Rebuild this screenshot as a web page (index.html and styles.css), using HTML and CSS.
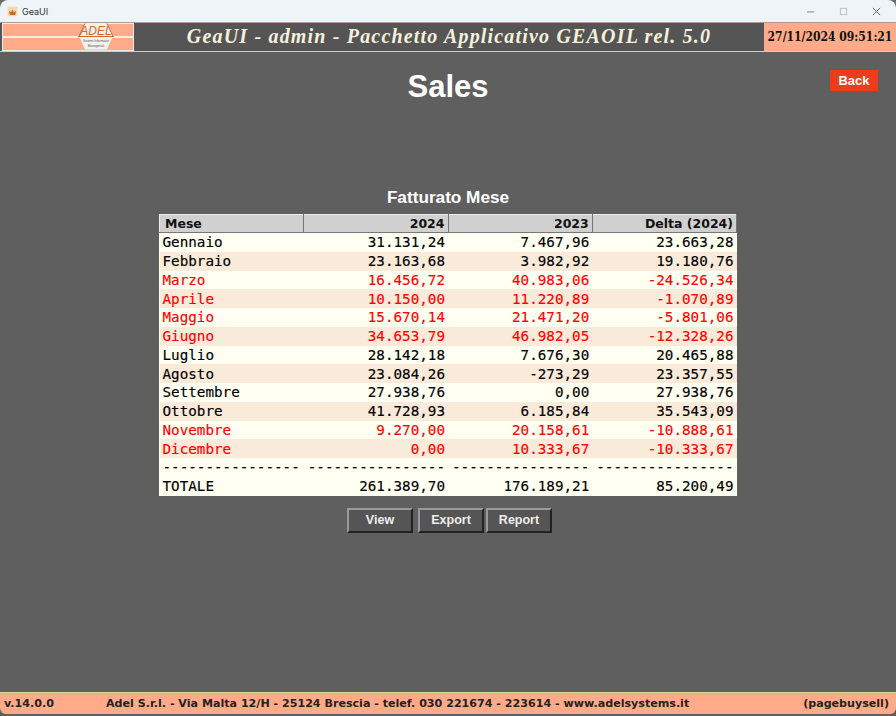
FILE: index.html
```html
<!DOCTYPE html>
<html lang="en">
<head>
  <meta charset="UTF-8">
  <title>GeaUI</title>
  <link rel="stylesheet" href="styles.css">
</head>
<body>
  <div class="window">
    <div class="titlebar">
      <svg class="app-icon" viewBox="0 0 16 16">
        <rect x="1" y="1" width="14" height="14" rx="2" fill="#f3d9a8"/>
        <path d="M3 7l3 2 2-4 2 4 3-2-1 6H4z" fill="#c9662c"/>
      </svg>
      <span class="app-name">GeaUI</span>
      <div class="win-buttons">
        <svg viewBox="0 0 10 10"><path d="M1 5.5h8" stroke="#777" fill="none"/></svg>
        <svg viewBox="0 0 10 10"><rect x="1.5" y="1.5" width="7" height="7" stroke="#bbb" fill="none"/></svg>
        <svg viewBox="0 0 10 10"><path d="M1 1l8 8M9 1l-8 8" stroke="#555" fill="none"/></svg>
      </div>
    </div>

    <div class="header">
      <div class="logo">
        <div class="logo-bar"></div>
        <div class="logo-bar"></div>
        <svg class="logo-mark" viewBox="0 0 36 27">
          <path d="M1 13L7 .5h22L35 13l-6 13.5H7z" fill="#f4f1ea"/>
          <path d="M1 13.5L7 .5M29 .5l6 13M0 13.5h36" stroke="#d9682a" stroke-width="1" fill="none"/>
          <text x="18" y="11.5" class="logo-name">ADEL</text>
          <text x="18" y="19" class="logo-small">Sistemi Informativi</text>
          <text x="18" y="24" class="logo-small">Manageriali</text>
        </svg>
      </div>
      <div class="app-title">GeaUI - admin - Pacchetto Applicativo GEAOIL rel. 5.0</div>
      <div class="clock">27/11/2024 09:51:21</div>
    </div>

    <div class="content">
      <div class="page-head">
        <h1>Sales</h1>
        <a class="back" href="#">Back</a>
      </div>

      <h2>Fatturato Mese</h2>
      <table class="grid">
        <thead>
          <tr><th class="left">Mese</th><th>2024</th><th>2023</th><th>Delta (2024)</th></tr>
        </thead>
        <tbody>
          <tr><td>Gennaio</td><td>31.131,24</td><td>7.467,96</td><td>23.663,28</td></tr>
          <tr class="alt"><td>Febbraio</td><td>23.163,68</td><td>3.982,92</td><td>19.180,76</td></tr>
          <tr class="neg"><td>Marzo</td><td>16.456,72</td><td>40.983,06</td><td>-24.526,34</td></tr>
          <tr class="alt neg"><td>Aprile</td><td>10.150,00</td><td>11.220,89</td><td>-1.070,89</td></tr>
          <tr class="neg"><td>Maggio</td><td>15.670,14</td><td>21.471,20</td><td>-5.801,06</td></tr>
          <tr class="alt neg"><td>Giugno</td><td>34.653,79</td><td>46.982,05</td><td>-12.328,26</td></tr>
          <tr><td>Luglio</td><td>28.142,18</td><td>7.676,30</td><td>20.465,88</td></tr>
          <tr class="alt"><td>Agosto</td><td>23.084,26</td><td>-273,29</td><td>23.357,55</td></tr>
          <tr><td>Settembre</td><td>27.938,76</td><td>0,00</td><td>27.938,76</td></tr>
          <tr class="alt"><td>Ottobre</td><td>41.728,93</td><td>6.185,84</td><td>35.543,09</td></tr>
          <tr class="neg"><td>Novembre</td><td>9.270,00</td><td>20.158,61</td><td>-10.888,61</td></tr>
          <tr class="alt neg"><td>Dicembre</td><td>0,00</td><td>10.333,67</td><td>-10.333,67</td></tr>
          <tr><td>----------------</td><td>----------------</td><td>----------------</td><td>----------------</td></tr>
          <tr><td>TOTALE</td><td>261.389,70</td><td>176.189,21</td><td>85.200,49</td></tr>
        </tbody>
      </table>

      <div class="actions">
        <button class="view">View</button>
        <button>Export</button>
        <button>Report</button>
      </div>
    </div>

    <div class="footer">
      <span class="version">v.14.0.0</span>
      <span class="company">Adel S.r.l. - Via Malta 12/H - 25124 Brescia - telef. 030 221674 - 223614 - www.adelsystems.it</span>
      <span class="page-id">(pagebuysell)</span>
    </div>
  </div>
</body>
</html>
```

FILE: styles.css
```css
html, body {
  margin: 0;
  padding: 0;
  height: 100%;
  background-color: #6a6a6a;
}
.window {
  height: 716px;
  display: flex;
  flex-direction: column;
  background-color: #5f5f5f;
  border-radius: 8px 8px 0 0;
  overflow: hidden;
}
.titlebar {
  height: 22px;
  display: flex;
  align-items: center;
  background-color: #eff4f9;
  padding-left: 7px;
  color: #333;
}
.app-icon {
  width: 11px;
  height: 11px;
  margin-right: 4px;
}
.app-name {
  font-family: "Inter", sans-serif;
  font-size: 9px;
}
.win-buttons {
  margin-left: auto;
  display: flex;
  gap: 24px;
  padding-right: 15px;
}
.win-buttons svg {
  width: 9px;
  height: 9px;
  display: block;
}
.header {
  height: 28px;
  display: flex;
  background-color: #555;
  border-top: 1px solid #b09a90;
  border-bottom: 1px solid #d9d59a;
}
.logo {
  position: relative;
  width: 132px;
  margin-left: 2px;
  padding: 1px;
  display: flex;
  flex-direction: column;
  gap: 2px;
  background-color: #f0ece4;
  box-sizing: border-box;
}
.logo-bar {
  flex: 1;
  background-color: #ffaa88;
}
.logo-mark {
  position: absolute;
  left: 76px;
  top: 0;
  width: 36px;
  height: 27px;
}
.logo-name {
  font-family: "Liberation Sans", sans-serif;
  font-size: 12px;
  font-style: italic;
  fill: #d9682a;
  text-anchor: middle;
}
.logo-small {
  font-family: "Liberation Sans", sans-serif;
  font-size: 3.2px;
  fill: #555;
  text-anchor: middle;
}
.app-title {
  flex: 1;
  text-align: center;
  font-family: "Liberation Serif", serif;
  font-style: italic;
  font-weight: bold;
  font-size: 20px;
  line-height: 27px;
  letter-spacing: 1.18px;
  color: #f5f0dc;
}
.clock {
  width: 132px;
  background-color: #ffaa88;
  font-family: "DejaVu Serif", serif;
  font-stretch: condensed;
  font-weight: bold;
  font-size: 12px;
  line-height: 28px;
  text-align: center;
  color: #111;
  white-space: nowrap;
}
.content {
  flex: 1;
  display: flex;
  flex-direction: column;
  align-items: center;
  position: relative;
}
.page-head {
  align-self: stretch;
  height: 136px;
}
h1 {
  margin: 16px 0 0;
  text-align: center;
  font-family: "Liberation Sans", sans-serif;
  font-size: 31px;
  line-height: 37px;
  color: #fff;
}
.back {
  position: absolute;
  top: 18px;
  right: 18px;
  width: 48px;
  height: 21px;
  background-color: #ee3b1e;
  color: #fff;
  font-family: "Liberation Sans", sans-serif;
  font-weight: bold;
  font-size: 13px;
  line-height: 21px;
  text-align: center;
  text-decoration: none;
}
h2 {
  margin: 0 0 7px;
  font-family: "Liberation Sans", sans-serif;
  font-size: 17.2px;
  line-height: 19px;
  color: #fff;
}
.grid {
  width: 578px;
  table-layout: fixed;
  border-collapse: collapse;
  background-color: #fffff2;
  font-family: "DejaVu Sans Mono", monospace;
  font-size: 14.25px;
}
.grid th {
  height: 18px;
  padding: 0 3px 0 0;
  text-align: right;
  font-family: "DejaVu Sans", sans-serif;
  font-size: 12.5px;
  background-color: #d0d0d0;
  color: #111;
  border: 1px solid #eee;
  border-right-color: #777;
  border-bottom-color: #777;
  box-sizing: border-box;
}
.grid th.left {
  text-align: left;
  padding-left: 5px;
}
.grid td {
  height: 18.75px;
  padding: 0 3px 0 0;
  text-align: right;
  color: #000;
  -webkit-text-stroke: 0.15px currentColor;
  white-space: nowrap;
}
.grid td:first-child {
  text-align: left;
  padding-left: 3px;
}
.grid .alt td {
  background-color: #f9ead9;
}
.grid .neg td {
  color: #ff0000;
}
.actions {
  margin-top: 12px;
  margin-left: 3px;
  display: flex;
}
.actions button {
  width: 66px;
  height: 25px;
  padding: 0;
  background-color: #555;
  color: #eee;
  border: 2px solid;
  border-color: #999 #222 #222 #999;
  font-family: "Liberation Sans", sans-serif;
  font-weight: bold;
  font-size: 12.5px;
}
.actions button + button {
  margin-left: 2px;
}
.actions .view {
  margin-right: 3px;
}
.footer {
  height: 22px;
  margin-bottom: 2px;
  display: flex;
  align-items: center;
  background-color: #ffaa88;
  border-top: 1px solid #d9d59a;
  border-radius: 0 0 6px 6px;
  font-family: "DejaVu Sans", sans-serif;
  font-weight: bold;
  font-size: 11.1px;
  color: #222;
  box-sizing: border-box;
  padding: 0 7px 0 4px;
  white-space: nowrap;
}
.version {
  width: 102px;
}
.page-id {
  margin-left: auto;
}
```
